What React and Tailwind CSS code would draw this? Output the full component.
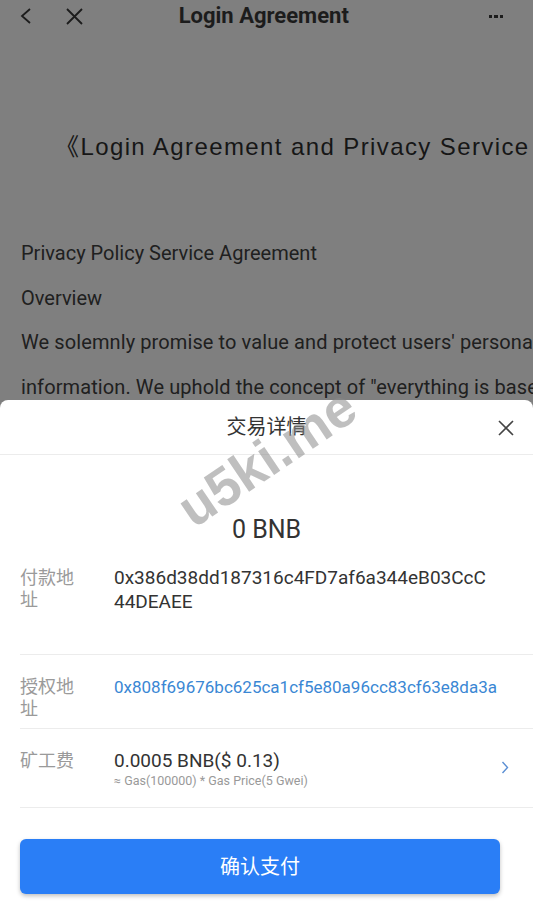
import React from 'react';

const FONT = "font-['Roboto','Noto_Sans_CJK_SC',sans-serif]";

const Row = ({ label, children, className = '' }) => (
    <div className={`ml-[20px] flex items-start border-b border-[#ececec] ${className}`}>
        <div className="w-[60px] shrink-0 text-[18px] leading-[22px] text-[#9a9a9a] pt-[1px]">{label}</div>
        <div className="ml-[34px] flex-1 min-w-0">{children}</div>
    </div>
);

export default function App() {
    return (
        <div className={`relative h-[912px] w-full overflow-hidden bg-[#7f7f7f] ${FONT}`}>
            {/* Page behind the sheet (dimmed) */}
            <div className="flex h-[32px] items-center px-[18px] text-[#1c1c1c]">
                <svg width="14" height="16" viewBox="0 0 14 16" className="ml-[1px]">
                    <polyline points="11,1 3,8 11,15" fill="none" stroke="#1c1c1c" strokeWidth="1.8" />
                </svg>
                <svg width="17" height="17" viewBox="0 0 17 17" className="ml-[33px]">
                    <path d="M1 1 L16 16 M16 1 L1 16" stroke="#1c1c1c" strokeWidth="1.8" />
                </svg>
                <div className="flex-1 text-center text-[22px] font-bold leading-[32px] pr-[44px]">Login Agreement</div>
                <div className="mr-[12px] flex gap-[2px]">
                    <span className="h-[3px] w-[3.5px] bg-[#1c1c1c]" />
                    <span className="h-[3px] w-[3.5px] bg-[#1c1c1c]" />
                    <span className="h-[3px] w-[3.5px] bg-[#1c1c1c]" />
                </div>
            </div>

            <div className="mt-[98px] whitespace-nowrap pl-[55px] font-['Liberation_Sans','Noto_Sans_CJK_SC',sans-serif] text-[24px] leading-[34px] tracking-[1.4px] text-[#161616]">
                《Login Agreement and Privacy Service Agreement》
            </div>

            <div className="mt-[67px] whitespace-nowrap pl-[21px] text-[20px] leading-[44.5px] text-[#202020]">
                <p>Privacy Policy Service Agreement</p>
                <p>Overview</p>
                <p className="tracking-[0.1px]">We solemnly promise to value and protect users' personal</p>
                <p className="tracking-[0.1px]">information. We uphold the concept of "everything is based</p>
            </div>

            {/* Bottom sheet */}
            <div className="absolute bottom-0 left-0 right-0 h-[512px] rounded-t-[8px] bg-white text-[#333]">
                <div className="relative flex h-[55px] items-center justify-center border-b border-[#ececec]">
                    <span className="text-[20px] text-[#333]">交易详情</span>
                    <svg width="16" height="16" viewBox="0 0 16 16" className="absolute right-[19px] top-[20px]">
                        <path d="M1 1 L15 15 M15 1 L1 15" stroke="#444" strokeWidth="1.6" />
                    </svg>
                </div>

                <div className="pb-[9px] pt-[59px] text-center text-[25px] leading-[32px] text-[#333]">0 BNB</div>

                <Row label="付款地址" className="pb-[40px] pt-[11px]">
                    <div className="break-all text-[19px] leading-[24px] text-[#333]">
                        0x386d38dd187316c4FD7af6a344eB03CcC
                        <br />
                        44DEAEE
                    </div>
                </Row>

                <Row label="授权地址" className="pb-[8px] pt-[20px]">
                    <div className="whitespace-nowrap text-[17px] leading-[24px] text-[#3a87d4]">
                        0x808f69676bc625ca1cf5e80a96cc83cf63e8da3a
                    </div>
                </Row>

                <Row label="矿工费" className="pb-[18px] pt-[20px]">
                    <div className="flex items-center pr-[24px]">
                        <div className="flex-1">
                            <div className="text-[19px] leading-[24px] text-[#333]">0.0005 BNB($ 0.13)</div>
                            <div className="text-[12.5px] leading-[16px] text-[#999]">≈ Gas(100000) * Gas Price(5 Gwei)</div>
                        </div>
                        <svg width="8" height="13" viewBox="0 0 8 13" className="-mt-[4px]">
                            <polyline points="1.5,1 6.5,6.5 1.5,12" fill="none" stroke="#5b8fd4" strokeWidth="1.4" />
                        </svg>
                    </div>
                </Row>

                <button className="ml-[20px] mr-[33px] mt-[31px] flex h-[55px] w-[480px] items-center justify-center rounded-[6px] bg-[#2a7ef6] text-[20px] text-white shadow-[0_2px_4px_rgba(0,0,0,0.25)]">
                    确认支付
                </button>
            </div>

            {/* Watermark */}
            <div className="pointer-events-none absolute left-[166px] top-[430px] -rotate-[34deg] font-['Liberation_Sans',sans-serif] text-[54px] font-bold leading-none text-[#8a8a8a]/55">
                u5ki.me
            </div>
        </div>
    );
}
